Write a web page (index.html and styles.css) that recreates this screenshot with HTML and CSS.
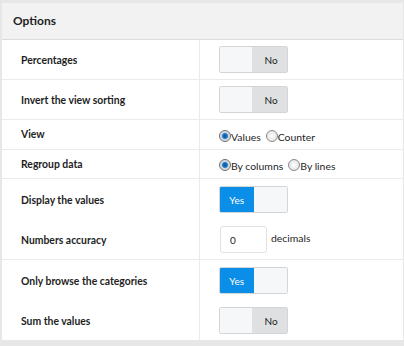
FILE: index.html
```html
<!DOCTYPE html>
<html lang="en">
<head>
    <meta charset="UTF-8">
    <title>Options</title>
    <link rel="stylesheet" href="styles.css">
</head>
<body>
    <div class="panel">
        <div class="panel-head">Options</div>
        <table class="options">
            <tr class="tall">
                <td class="label">Percentages</td>
                <td><div class="toggle off"><span class="side"></span><span class="side state">No</span></div></td>
            </tr>
            <tr class="tall">
                <td class="label">Invert the view sorting</td>
                <td><div class="toggle off"><span class="side"></span><span class="side state">No</span></div></td>
            </tr>
            <tr class="short">
                <td class="label">View</td>
                <td>
                    <span class="radio checked"></span><span class="radio-text">Values</span>
                    <span class="radio"></span><span class="radio-text">Counter</span>
                </td>
            </tr>
            <tr class="short">
                <td class="label">Regroup data</td>
                <td>
                    <span class="radio checked"></span><span class="radio-text">By columns</span>
                    <span class="radio"></span><span class="radio-text">By lines</span>
                </td>
            </tr>
            <tr class="tall no-line">
                <td class="label">Display the values</td>
                <td><div class="toggle on"><span class="side state">Yes</span><span class="side"></span></div></td>
            </tr>
            <tr class="tall">
                <td class="label">Numbers accuracy</td>
                <td><input class="number" type="text" value="0"><span class="unit">decimals</span></td>
            </tr>
            <tr class="tall no-line">
                <td class="label">Only browse the categories</td>
                <td><div class="toggle on"><span class="side state">Yes</span><span class="side"></span></div></td>
            </tr>
            <tr class="tall last">
                <td class="label">Sum the values</td>
                <td><div class="toggle off"><span class="side"></span><span class="side state">No</span></div></td>
            </tr>
        </table>
    </div>
</body>
</html>
```

FILE: styles.css
```css
body {
    margin: 0;
    padding: 3px 1px 5px 2px;
    background-color: #e7e7e8;
    font-family: Lato, "Noto Sans", sans-serif;
    color: #1e1e1e;
}
.panel {
    background-color: #fff;
}
.panel-head {
    height: 36px;
    line-height: 35px;
    padding-left: 11px;
    background-color: #f2f2f3;
    border-bottom: 1px solid #dcdcde;
    font-size: 12px;
    font-weight: bold;
}
.options {
    width: 100%;
    border-collapse: collapse;
}
.options td {
    padding: 0 0 0 19px;
    border-bottom: 1px solid #ebebec;
    vertical-align: middle;
}
.options tr.no-line td,
.options tr.last td {
    border-bottom: none;
}
.options td.label {
    width: 178px;
    border-right: 1px solid #ebebec;
    font-size: 10.4px;
    font-weight: bold;
}
.tall td {
    height: 39px;
}
.tall.no-line td {
    height: 41px;
}
.short td {
    height: 28.5px;
}
.toggle {
    display: flex;
    width: 67px;
    height: 25px;
    border: 1px solid #d4d5d8;
    border-radius: 2px;
    overflow: hidden;
}
.toggle .side {
    flex: 1;
    display: flex;
    align-items: center;
    justify-content: center;
    font-size: 10px;
    background-color: #f6f7f9;
}
.toggle.off .state {
    background-color: #dfe0e2;
    color: #222;
    padding-left: 3px;
}
.toggle.on .state {
    background-color: #0b8ee8;
    color: #fff;
}
.radio {
    display: inline-block;
    width: 10px;
    height: 10px;
    border: 1px solid #8a8c90;
    border-radius: 50%;
    background: radial-gradient(circle, #fff 0%, #d9dadd 100%);
    vertical-align: -1px;
}
.radio.checked {
    background: radial-gradient(circle, #0c4f8c 0, #1c7fd0 2.5px, #cfd2d6 3.5px, #f3f3f4 100%);
    border-color: #6b7079;
}
.radio-text {
    font-size: 10.4px;
    margin-right: 1px;
}
.number {
    box-sizing: border-box;
    width: 47px;
    height: 27px;
    margin: 0 4px 0 1px;
    padding: 0 0 0 9px;
    border: 1px solid #e1e2e4;
    border-radius: 3px;
    font-family: Lato, "Noto Sans", sans-serif;
    font-size: 10px;
    color: #222;
    vertical-align: middle;
}
.unit {
    font-size: 10.4px;
    vertical-align: 2px;
}
```
